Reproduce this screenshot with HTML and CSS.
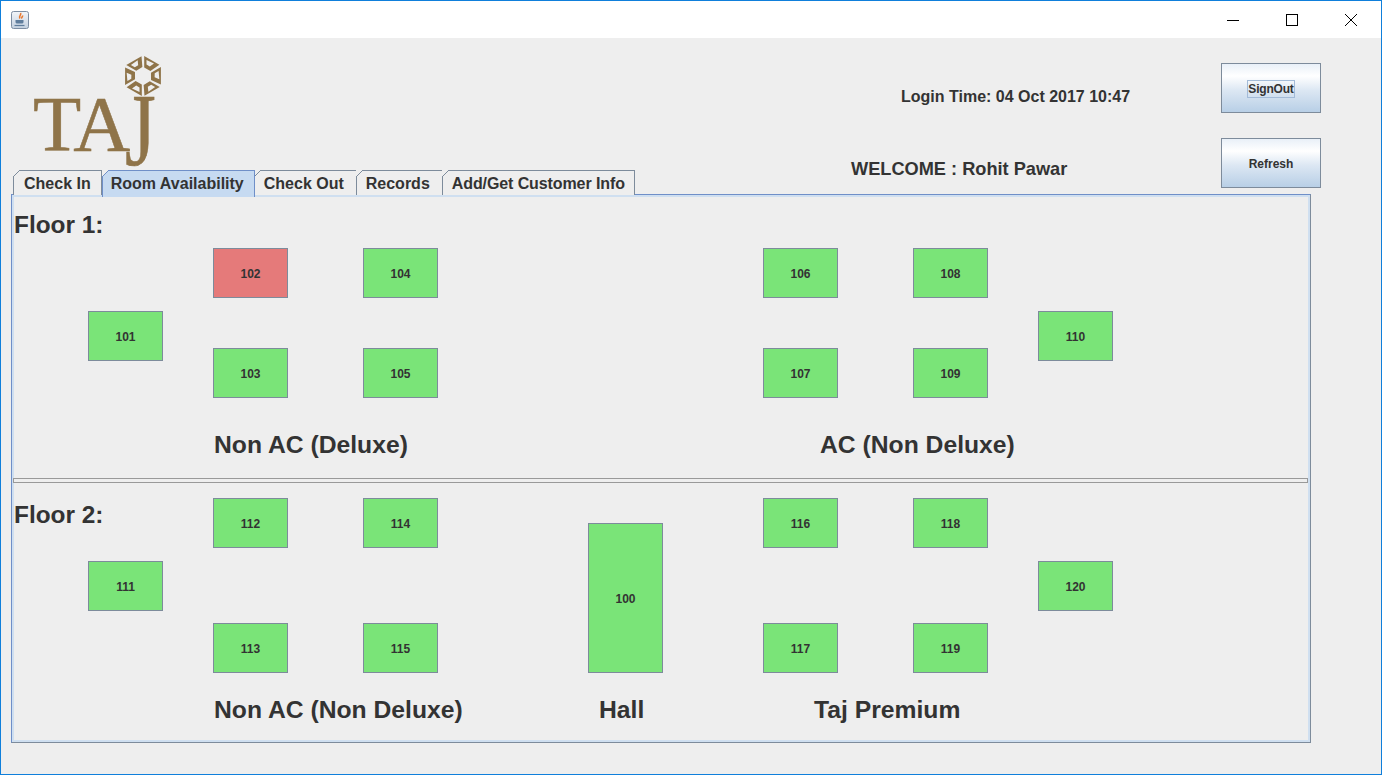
FILE: index.html
```html
<!DOCTYPE html>
<html lang="en">
<head>
    <meta charset="UTF-8">
    <meta name="viewport" content="width=device-width, initial-scale=1.0">
    <title>Taj Hotel</title>
    <link rel="stylesheet" href="styles.css">
</head>
<body>
<div class="window">
    <div class="titlebar">
        <svg class="app-icon" width="20" height="20" viewBox="0 0 20 20">
            <defs>
                <linearGradient id="iconbg" x1="0" y1="0" x2="0" y2="1">
                    <stop offset="0" stop-color="#f2f5f9"/>
                    <stop offset="1" stop-color="#c3d0df"/>
                </linearGradient>
            </defs>
            <rect x="1.500" y="1.500" width="17" height="17" rx="2" fill="url(#iconbg)" stroke="#7d8ea3"/>
            <path d="M10.500 3c1.500 2-2.500 3-.5 5.500M12.500 5.500c.5 1.500-1.500 1.500-.5 3" fill="none" stroke="#e8772e" stroke-width="1.600"/>
            <path d="M5.500 10h8v2c0 1-1 1.500-2 1.500h-4c-1 0-2-.5-2-1.500z" fill="#5f7d9c"/>
            <path d="M4.500 15.500h10" stroke="#5f7d9c" stroke-width="1.200"/>
        </svg>
        <div class="window-controls">
            <svg width="14" height="14" viewBox="0 0 14 14"><path d="M1 7.500h12" stroke="#000"/></svg>
            <svg width="14" height="14" viewBox="0 0 14 14"><rect x="1.500" y="1.500" width="11" height="11" fill="none" stroke="#000"/></svg>
            <svg width="14" height="14" viewBox="0 0 14 14"><path d="M1 1l12 12M13 1L1 13" stroke="#000" fill="none"/></svg>
        </div>
    </div>

    <div class="content">
        <div class="header">
            <div class="header-left">
                <div class="logo">
                    <svg class="emblem" width="40" height="40" viewBox="-20 -20 40 40">
                        <defs>
                            <path id="seg" fill-rule="evenodd" d="M1.200 -20L16.400 -11.200L7.400 -5L1.200 -8.500ZM3.500 -16L3.500 -11.500L6.800 -9.500L11 -12.500Z"/>
                        </defs>
                        <g fill="#8f7449">
                            <use href="#seg"/>
                            <use href="#seg" transform="rotate(60)"/>
                            <use href="#seg" transform="rotate(120)"/>
                            <use href="#seg" transform="rotate(180)"/>
                            <use href="#seg" transform="rotate(240)"/>
                            <use href="#seg" transform="rotate(300)"/>
                        </g>
                    </svg>
                    <div class="wordmark"><span class="ta">TA</span><span class="j">J</span></div>
                </div>
                <div class="tabs">
                    <div class="tab">Check In</div>
                    <div class="tab selected">Room Availability</div>
                    <div class="tab">Check Out</div>
                    <div class="tab">Records</div>
                    <div class="tab long">Add/Get Customer Info</div>
                </div>
            </div>
            <div class="header-info">
                <div class="login-time">Login Time: 04 Oct 2017 10:47</div>
                <div class="welcome">WELCOME : Rohit Pawar</div>
            </div>
            <div class="header-buttons">
                <button class="action"><span class="focused">SignOut</span></button>
                <button class="action">Refresh</button>
            </div>
        </div>

        <div class="pane">
            <div class="floor floor-one">
                <div class="floor-title">Floor 1:</div>
                <div class="room c1 r-mid">101</div>
                <div class="room c2 r-top booked">102</div>
                <div class="room c2 r-bottom">103</div>
                <div class="room c3 r-top">104</div>
                <div class="room c3 r-bottom">105</div>
                <div class="room c5 r-top">106</div>
                <div class="room c5 r-bottom">107</div>
                <div class="room c6 r-top">108</div>
                <div class="room c6 r-bottom">109</div>
                <div class="room c7 r-mid">110</div>
                <div class="section c2">Non AC (Deluxe)</div>
                <div class="section c5 ac">AC (Non Deluxe)</div>
            </div>
            <div class="divider"></div>
            <div class="floor floor-two">
                <div class="floor-title">Floor 2:</div>
                <div class="room c1 r-mid">111</div>
                <div class="room c2 r-top">112</div>
                <div class="room c2 r-bottom">113</div>
                <div class="room c3 r-top">114</div>
                <div class="room c3 r-bottom">115</div>
                <div class="room c4 r-hall">100</div>
                <div class="room c5 r-top">116</div>
                <div class="room c5 r-bottom">117</div>
                <div class="room c6 r-top">118</div>
                <div class="room c6 r-bottom">119</div>
                <div class="room c7 r-mid">120</div>
                <div class="section c2">Non AC (Non Deluxe)</div>
                <div class="section c4 hall">Hall</div>
                <div class="section c5 premium">Taj Premium</div>
            </div>
        </div>
    </div>
</div>
</body>
</html>
```

FILE: styles.css
```css
* {
    box-sizing: border-box;
}

html, body {
    margin: 0;
    height: 100%;
    overflow: hidden;
}

body {
    font-family: "Liberation Sans", Arial, sans-serif;
    color: #333;
    background-color: #eee;
}

.window {
    width: 1382px;
    height: 775px;
    border: 1px solid #0f7fdb;
    display: flex;
    flex-direction: column;
}

.titlebar {
    height: 37px;
    background-color: #fff;
    display: flex;
    align-items: center;
    justify-content: space-between;
    flex-shrink: 0;
}

.app-icon {
    margin-left: 9px;
}

.window-controls {
    display: flex;
    gap: 45px;
    margin-right: 23px;
}

.content {
    padding-left: 10px;
    background-color: #eee;
    flex: 1;
}

.header {
    display: flex;
    height: 157px;
}

.header-left {
    width: 634px;
    padding-left: 2px;
    display: flex;
    flex-direction: column;
    justify-content: flex-end;
    flex-shrink: 0;
}

.logo {
    height: 132px;
    position: relative;
}

.emblem {
    position: absolute;
    left: 110px;
    top: 18px;
}

.wordmark {
    position: absolute;
    left: 20px;
    top: 56px;
    font-family: "Liberation Serif", serif;
    font-size: 79px;
    line-height: 60px;
    color: #8f7449;
    white-space: nowrap;
    font-kerning: none;
    -webkit-text-stroke: 0.5px #8f7449;
}

.wordmark .ta {
    display: block;
    width: 92px;
    letter-spacing: -8px;
}

/* the logo's J hangs below the baseline */
.wordmark .j {
    position: absolute;
    left: 92px;
    top: 0;
    transform: scaleY(1.3);
    transform-origin: 50% 5px;
}

.tabs {
    display: flex;
    height: 25px;
    position: relative;
    z-index: 1;
}

.tab {
    position: relative;
    height: 25px;
    padding: 3px 12px 0 9px;
    margin-left: -1px;
    font-size: 16px;
    font-weight: bold;
    line-height: 20px;
    white-space: nowrap;
    border: 1px solid #7d8b9b;
    border-bottom: none;
    background-color: #eee;
}

.tab:first-child {
    margin-left: 0;
    padding: 3px 10px 0;
}

.tab.long {
    letter-spacing: -0.1px;
    padding-right: 9px;
}

.tab::before {
    content: "";
    position: absolute;
    left: -1px;
    top: -1px;
    width: 7px;
    height: 7px;
    background: linear-gradient(135deg, #eee 45%, #7d8b9b 46%, #7d8b9b 56%, transparent 57%);
}

.tab.selected {
    background-color: #c6daf1;
    border-color: #6f8fc8;
    height: 27px;
    z-index: 2;
    padding: 3px 10px 0 8px;
    margin-left: 0;
}

.tab.selected::before {
    background: linear-gradient(135deg, #eee 45%, #6f8fc8 46%, #6f8fc8 56%, transparent 57%);
}

.header-info {
    width: 576px;
    padding-top: 49px;
    font-weight: bold;
    flex-shrink: 0;
}

.login-time {
    font-size: 16px;
    line-height: 20px;
    margin-left: 256px;
}

.welcome {
    font-size: 18.2px;
    line-height: 22px;
    margin-top: 51px;
    margin-left: 206px;
}

.header-buttons {
    padding-top: 25px;
    display: flex;
    flex-direction: column;
    gap: 25px;
}

.action {
    width: 100px;
    height: 50px;
    padding: 2px 0 0;
    font-family: "Liberation Sans", Arial, sans-serif;
    font-size: 12px;
    font-weight: bold;
    color: #333;
    border: 1px solid #7d8b9b;
    border-radius: 0;
    background-image: linear-gradient(to bottom, #e9f0f8 0%, #fff 25%, #dce7f3 55%, #b8cfe6 100%);
}

.focused {
    display: inline-block;
    padding: 0;
    letter-spacing: -0.2px;
    line-height: 16px;
    border: 1px solid #a3bbd8;
}

.pane {
    width: 1300px;
    height: 549px;
    margin-top: -1px;
    border: 1px solid #7d8b9b;
    border-top-color: #6f8fc8;
    border-left-color: #6f8fc8;
    padding: 2px 2px 2px 1px;
    background-color: #eee;
    box-shadow: inset 0 0 0 2px #cfdff0;
}

.floor {
    display: grid;
    grid-template-columns: 75px 75px 50px 75px 75px 75px 150px 75px 100px 75px 75px 75px 50px 75px;
}

.floor-one {
    height: 281px;
    grid-template-rows: 51px 50px 13px 37px 13px 37px 80px;
}

.floor-two {
    height: 256px;
    grid-template-rows: 15px 25px 25px 13px 50px 12px 50px 66px;
}

.floor-title {
    grid-column: 1 / 4;
    grid-row: 1 / 3;
    padding-left: 1px;
    font-size: 24.4px;
    font-weight: bold;
    line-height: 28px;
    white-space: nowrap;
}

.floor-one .floor-title {
    margin-top: 14px;
}

.floor-two .floor-title {
    margin-top: 18px;
    grid-row: 1 / 5;
}

.divider {
    height: 5px;
    border: 1px solid #999;
    background-color: #eee;
}

.room {
    display: flex;
    align-items: center;
    justify-content: center;
    padding-top: 2px;
    font-size: 12px;
    font-weight: bold;
    background-color: #7ae478;
    border: 1px solid #7d8b9b;
}

.room.booked {
    background-color: #e57a7a;
}

.c1 { grid-column: 2; }
.c2 { grid-column: 4; }
.c3 { grid-column: 6; }
.c4 { grid-column: 8; }
.c5 { grid-column: 10; }
.c6 { grid-column: 12; }
.c7 { grid-column: 14; }

.floor-one .r-top { grid-row: 2; }
.floor-one .r-mid { grid-row: 4 / 6; }
.floor-one .r-bottom { grid-row: 5 / 7; }

.floor-two .r-top { grid-row: 2 / 4; }
.floor-two .r-mid { grid-row: 5; }
.floor-two .r-bottom { grid-row: 7; }
.floor-two .r-hall { grid-row: 3 / 8; }

.section {
    grid-row: -2;
    font-size: 24.7px;
    font-weight: bold;
    line-height: 28px;
    white-space: nowrap;
    align-self: center;
    padding-left: 1px;
    width: 0;
}

.floor-one .section { margin-top: 14px; }
.floor-two .section { margin-top: 8px; }

.section.ac { margin-left: 56px; }
.section.hall { margin-left: 10px; }
.section.premium { margin-left: 50px; }
```
